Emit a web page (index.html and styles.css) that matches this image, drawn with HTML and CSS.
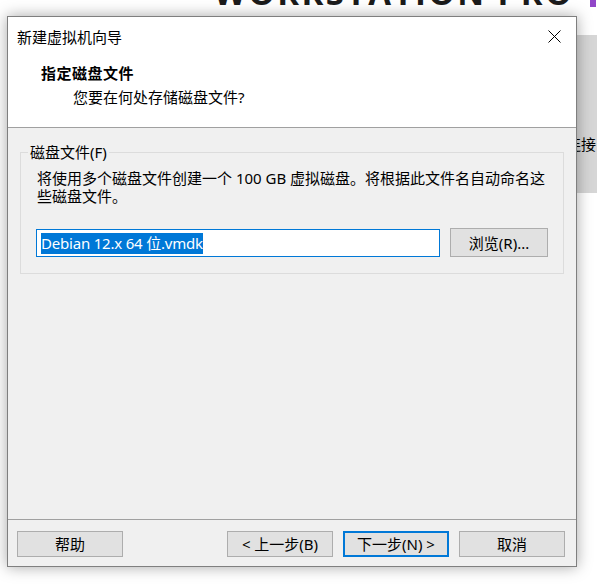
FILE: index.html
```html
<!DOCTYPE html>
<html>
<head lang="zh-CN">
    <meta charset="UTF-8">
    <title>新建虚拟机向导</title>
    <link rel="stylesheet" href="styles.css">
</head>
<body>

<!-- 后面的主窗口 -->
<div class="brand">WORKSTATION PRO</div>
<div class="brand-mark"></div>
<div class="app-panel">
    <span class="app-text">连接</span>
</div>

<!-- 向导对话框 -->
<div class="dialog">
    <div class="titlebar">
        <span class="title">新建虚拟机向导</span>
        <span class="close">
            <svg width="13" height="13" viewBox="0 0 13 13">
                <path d="M0.5 0.5 L12.5 12.5 M12.5 0.5 L0.5 12.5" stroke="#000" stroke-width="1" fill="none"/>
            </svg>
        </span>
    </div>
    <div class="header">
        <h1>指定磁盘文件</h1>
        <p>您要在何处存储磁盘文件?</p>
    </div>
    <div class="content">
        <fieldset class="group">
            <legend>磁盘文件(F)</legend>
            <p class="desc">将使用多个磁盘文件创建一个 100 GB 虚拟磁盘。将根据此文件名自动命名这些磁盘文件。</p>
            <div class="file-row">
                <div class="textbox"><span class="selected">Debian 12.x 64 位.vmdk</span></div>
                <button class="btn btn-browse">浏览(R)...</button>
            </div>
        </fieldset>
    </div>
    <div class="footer">
        <button class="btn">帮助</button>
        <span class="spacer"></span>
        <button class="btn">&lt; 上一步(B)</button>
        <button class="btn btn-default">下一步(N) &gt;</button>
        <button class="btn">取消</button>
    </div>
</div>

</body>
</html>
```

FILE: styles.css
```css
* {
    margin: 0px;
    box-sizing: border-box;
}
body {
    position: relative;
    width: 597px;
    height: 584px;
    overflow: hidden;
    background-color: #fff;
    font-family: "Noto Sans", "Noto Sans CJK SC", sans-serif;
    font-size: 15px;
    color: #000;
}
.brand {
    position: absolute;
    left: 214px;
    top: -24px;
    font-family: "Open Sans", sans-serif;
    font-weight: 700;
    font-size: 33px;
    line-height: 33px;
    letter-spacing: 2.5px;
    color: #1b1b1b;
    white-space: nowrap;
}
.brand-mark {
    position: absolute;
    left: 590px;
    top: 0px;
    width: 6px;
    height: 7px;
    background-color: #9146c8;
}
.app-panel {
    position: absolute;
    left: 540px;
    top: 35px;
    width: 57px;
    height: 158px;
    background-color: #d6d6d6;
}
.app-text {
    position: absolute;
    left: 26px;
    top: 99px;
    font-family: "Noto Sans CJK SC", sans-serif;
    font-size: 15px;
    line-height: 20px;
}
.dialog {
    position: absolute;
    left: 7px;
    top: 16px;
    width: 570px;
    height: 551px;
    border: 1px solid #7f7f7f;
    background-color: #f0f0f0;
    box-shadow: 0 0 14px rgba(0, 0, 0, 0.35);
    display: flex;
    flex-direction: column;
}
.titlebar {
    height: 40px;
    background-color: #fff;
    display: flex;
    align-items: center;
    justify-content: space-between;
    padding-left: 9px;
    padding-right: 15px;
}
.title {
    line-height: 20px;
}
.close {
    display: flex;
    margin-top: -2px;
}
.header {
    height: 71px;
    background-color: #fff;
    border-bottom: 1px solid #a0a0a0;
    padding: 6px 0 0 33px;
}
.header h1 {
    font-size: 15px;
    font-weight: bold;
    line-height: 20px;
    letter-spacing: 0.5px;
}
.header p {
    margin-top: 4px;
    margin-left: 32px;
    line-height: 20px;
}
.content {
    flex: 1;
    padding: 14px 12px 0 12px;
}
.group {
    border: 1px solid #dcdcdc;
    padding: 7px 15px 16px 16px;
    min-width: 0;
}
.group legend {
    margin-left: -9px;
    padding: 0 2px;
    line-height: 20px;
}
.desc {
    line-height: 18px;
}
.file-row {
    display: flex;
    gap: 10px;
    margin-top: 24px;
    margin-left: -1px;
}
.textbox {
    width: 404px;
    height: 28px;
    border: 1px solid #0078d7;
    background-color: #fff;
    padding: 3px 4px 0 4px;
    line-height: 21px;
    white-space: nowrap;
}
.selected {
    display: inline-block;
    background-color: #0078d7;
    color: #fff;
    letter-spacing: -0.2px;
}
.btn {
    width: 106px;
    height: 26px;
    border: 1px solid #adadad;
    background-color: #e1e1e1;
    font-family: "Noto Sans", "Noto Sans CJK SC", sans-serif;
    font-size: 15px;
    line-height: 20px;
    color: #000;
    padding: 0;
}
.btn-browse {
    width: 98px;
    height: 29px;
    margin-top: -1px;
}
.btn-default {
    border: 2px solid #0078d7;
}
.footer {
    display: flex;
    gap: 10px;
    border-top: 1px solid #a0a0a0;
    padding: 11px 11px 9px 9px;
}
.spacer {
    flex: 1;
}
```
